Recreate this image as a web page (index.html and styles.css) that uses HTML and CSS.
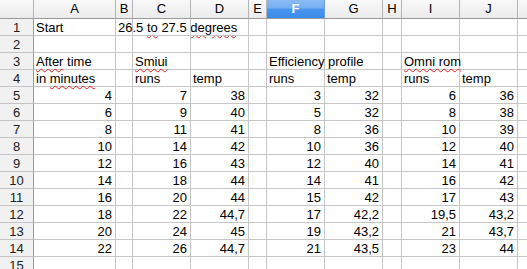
FILE: index.html
```html
<!DOCTYPE html>
<html>
<head>
<meta charset="utf-8">
<link rel="stylesheet" href="styles.css">
</head>
<body>
<div class="sheet">
  <div class="h corner"></div>
  <div class="h">A</div><div class="h">B</div><div class="h">C</div><div class="h">D</div><div class="h">E</div>
  <div class="h sel">F</div><div class="h">G</div><div class="h">H</div><div class="h">I</div><div class="h">J</div><div class="h"></div>

  <div class="r">1</div>
  <div class="c">Start</div><div class="c">26.5 <span class="sp">to</span> 27.5 <span class="sp">degrees</span></div><div class="c"></div><div class="c"></div><div class="c"></div><div class="c"></div><div class="c"></div><div class="c"></div><div class="c"></div><div class="c"></div><div class="c"></div>

  <div class="r">2</div>
  <div class="c"></div><div class="c"></div><div class="c"></div><div class="c"></div><div class="c"></div><div class="c"></div><div class="c"></div><div class="c"></div><div class="c"></div><div class="c"></div><div class="c"></div>

  <div class="r">3</div>
  <div class="c"><span class="sp">After</span> time</div><div class="c"></div><div class="c"><span class="sp">Smiui</span></div><div class="c"></div><div class="c"></div><div class="c">Efficiency profile</div><div class="c"></div><div class="c"></div><div class="c"><span class="sp">Omni rom</span></div><div class="c"></div><div class="c"></div>

  <div class="r">4</div>
  <div class="c">in <span class="sp">minutes</span></div><div class="c"></div><div class="c">runs</div><div class="c">temp</div><div class="c"></div><div class="c">runs</div><div class="c">temp</div><div class="c"></div><div class="c">runs</div><div class="c">temp</div><div class="c"></div>

  <div class="r">5</div>
  <div class="c n">4</div><div class="c"></div><div class="c n">7</div><div class="c n">38</div><div class="c"></div><div class="c n">3</div><div class="c n">32</div><div class="c"></div><div class="c n">6</div><div class="c n">36</div><div class="c"></div>

  <div class="r">6</div>
  <div class="c n">6</div><div class="c"></div><div class="c n">9</div><div class="c n">40</div><div class="c"></div><div class="c n">5</div><div class="c n">32</div><div class="c"></div><div class="c n">8</div><div class="c n">38</div><div class="c"></div>

  <div class="r">7</div>
  <div class="c n">8</div><div class="c"></div><div class="c n">11</div><div class="c n">41</div><div class="c"></div><div class="c n">8</div><div class="c n">36</div><div class="c"></div><div class="c n">10</div><div class="c n">39</div><div class="c"></div>

  <div class="r">8</div>
  <div class="c n">10</div><div class="c"></div><div class="c n">14</div><div class="c n">42</div><div class="c"></div><div class="c n">10</div><div class="c n">36</div><div class="c"></div><div class="c n">12</div><div class="c n">40</div><div class="c"></div>

  <div class="r">9</div>
  <div class="c n">12</div><div class="c"></div><div class="c n">16</div><div class="c n">43</div><div class="c"></div><div class="c n">12</div><div class="c n">40</div><div class="c"></div><div class="c n">14</div><div class="c n">41</div><div class="c"></div>

  <div class="r">10</div>
  <div class="c n">14</div><div class="c"></div><div class="c n">18</div><div class="c n">44</div><div class="c"></div><div class="c n">14</div><div class="c n">41</div><div class="c"></div><div class="c n">16</div><div class="c n">42</div><div class="c"></div>

  <div class="r">11</div>
  <div class="c n">16</div><div class="c"></div><div class="c n">20</div><div class="c n">44</div><div class="c"></div><div class="c n">15</div><div class="c n">42</div><div class="c"></div><div class="c n">17</div><div class="c n">43</div><div class="c"></div>

  <div class="r">12</div>
  <div class="c n">18</div><div class="c"></div><div class="c n">22</div><div class="c n">44,7</div><div class="c"></div><div class="c n">17</div><div class="c n">42,2</div><div class="c"></div><div class="c n">19,5</div><div class="c n">43,2</div><div class="c"></div>

  <div class="r">13</div>
  <div class="c n">20</div><div class="c"></div><div class="c n">24</div><div class="c n">45</div><div class="c"></div><div class="c n">19</div><div class="c n">43,2</div><div class="c"></div><div class="c n">21</div><div class="c n">43,7</div><div class="c"></div>

  <div class="r">14</div>
  <div class="c n">22</div><div class="c"></div><div class="c n">26</div><div class="c n">44,7</div><div class="c"></div><div class="c n">21</div><div class="c n">43,5</div><div class="c"></div><div class="c n">23</div><div class="c n">44</div><div class="c"></div>

  <div class="r">15</div>
  <div class="c"></div><div class="c"></div><div class="c"></div><div class="c"></div><div class="c"></div><div class="c"></div><div class="c"></div><div class="c"></div><div class="c"></div><div class="c"></div><div class="c"></div>
</div>
</body>
</html>
```
FILE: styles.css
```css
html, body {
  margin: 0;
  padding: 0;
  background: #ffffff;
  overflow: hidden;
}
body {
  width: 527px;
  height: 269px;
  font-family: "Liberation Sans", Arial, sans-serif;
  font-size: 13px;
  color: #000000;
}
.sheet {
  display: grid;
  grid-template-columns: 34px 82px 17px 58px 58px 18px 58px 58px 19px 58px 58px 10px;
  grid-template-rows: 19px;
  grid-auto-rows: 17px;
  width: 527px;
}
.sheet > div {
  box-sizing: border-box;
  white-space: nowrap;
  overflow: visible;
  line-height: 16px;
  padding-top: 1px;
}
.h {
  background: linear-gradient(#f9f9f9, #ebebeb);
  border-right: 1px solid #b4b4b4;
  border-bottom: 1px solid #9a9a9a;
  text-align: center;
  color: #000;
}
.sheet > .h {
  line-height: 18px;
  padding-top: 0;
}
.h.sel {
  background: linear-gradient(#8cbcf4 0%, #74aef2 45%, #4a95ee 50%, #3b8cec 100%);
  color: #ffffff;
  font-weight: bold;
  border-right-color: #6a9fd8;
}
.corner {
  background: linear-gradient(#f9f9f9, #ebebeb);
}
.r {
  background: #f1f1f1;
  border-right: 1px solid #9a9a9a;
  border-bottom: 1px solid #c4c4c4;
  text-align: center;
  color: #202020;
}
.c {
  border-right: 1px solid #c6c6c6;
  border-bottom: 1px solid #c6c6c6;
  padding-left: 2px;
}
.n {
  text-align: right;
  padding-left: 0;
  padding-right: 3px;
}
.sp {
  text-decoration: underline wavy #e02020;
  text-decoration-thickness: 1px;
  text-underline-offset: 2px;
}
```
